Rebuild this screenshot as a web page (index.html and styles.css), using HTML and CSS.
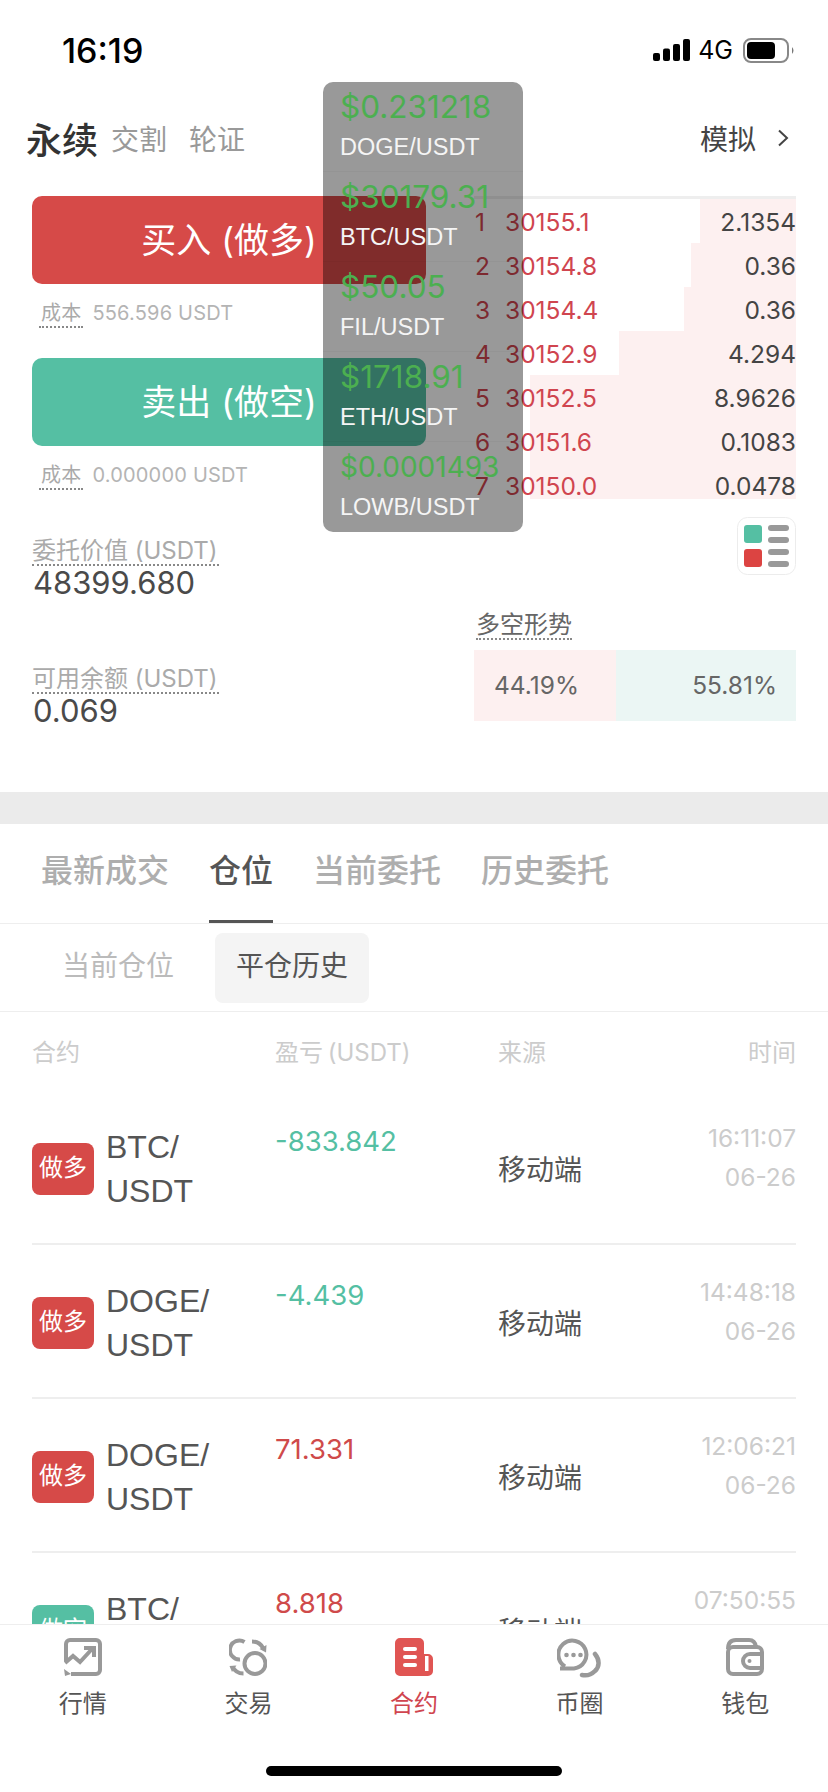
FILE: index.html
```html
<!DOCTYPE html>
<html lang="zh-CN">
<head>
    <meta charset="UTF-8">
    <meta name="viewport" content="width=device-width, initial-scale=1.0">
    <title>永续合约</title>
    <link rel="stylesheet" href="styles.css">
</head>
<body>
<div class="page">
    <div class="status">
        <span class="clock">16:19</span>
        <svg class="signal" width="37" height="22" viewBox="0 0 37 22"><rect x="0" y="14" width="7" height="8" rx="2"/><rect x="10" y="9.500" width="7" height="12.500" rx="2"/><rect x="20" y="5" width="7" height="17" rx="2"/><rect x="30" y="0" width="7" height="22" rx="2"/></svg>
        <span class="net">4G</span>
        <svg class="battery" width="52" height="25" viewBox="0 0 52 25"><rect x="1" y="1" width="44" height="23" rx="7" fill="none" stroke="#888" stroke-width="2"/><rect x="4" y="4" width="28" height="17" rx="4" fill="#000"/><path d="M49 9q3 3.500 0 7z" fill="#777"/></svg>
    </div>

    <div class="nav">
        <span class="nav-main">永续</span>
        <span class="nav-sub">交割</span>
        <span class="nav-sub">轮证</span>
        <span class="nav-right">模拟</span>
        <svg class="chevron" width="12" height="18" viewBox="0 0 12 18"><path d="M2 1.500l8 7.500-8 7.500" fill="none" stroke="#444" stroke-width="2"/></svg>
    </div>

    <div class="trade">
        <div class="trade-left">
            <div class="btn btn-buy">买入 (做多)</div>
            <div class="cost"><span class="dotted">成本</span><span>556.596 USDT</span></div>
            <div class="btn btn-sell">卖出 (做空)</div>
            <div class="cost"><span class="dotted">成本</span><span>0.000000 USDT</span></div>
            <div class="stat">
                <div><span class="stat-label">委托价值 (USDT)</span></div>
                <div class="stat-value">48399.680</div>
            </div>
            <div class="stat stat-second">
                <div><span class="stat-label">可用余额 (USDT)</span></div>
                <div class="stat-value">0.069</div>
            </div>
        </div>

        <div class="trade-right">
            <div class="book">
                <div class="book-row"><i class="depth" style="width:96px"></i><span class="num">1</span><span class="price">30155.1</span><span class="qty">2.1354</span></div>
                <div class="book-row"><i class="depth" style="width:105px"></i><span class="num">2</span><span class="price">30154.8</span><span class="qty">0.36</span></div>
                <div class="book-row"><i class="depth" style="width:112px"></i><span class="num">3</span><span class="price">30154.4</span><span class="qty">0.36</span></div>
                <div class="book-row"><i class="depth" style="width:177px"></i><span class="num">4</span><span class="price">30152.9</span><span class="qty">4.294</span></div>
                <div class="book-row"><i class="depth" style="width:266px"></i><span class="num">5</span><span class="price">30152.5</span><span class="qty">8.9626</span></div>
                <div class="book-row"><i class="depth" style="width:266px"></i><span class="num">6</span><span class="price">30151.6</span><span class="qty">0.1083</span></div>
                <div class="book-row"><i class="depth" style="width:266px"></i><span class="num">7</span><span class="price">30150.0</span><span class="qty">0.0478</span></div>
            </div>
            <svg class="book-toggle" width="59" height="58" viewBox="0 0 59 58">
                <rect x="0.500" y="0.500" width="58" height="57" rx="10" fill="#fff" stroke="#ececec"/>
                <rect x="7" y="8" width="18" height="18" rx="3" fill="#55bfa3"/>
                <rect x="7" y="32" width="18" height="18" rx="3" fill="#dc4442"/>
                <rect x="31" y="8" width="21" height="6" rx="3" fill="#999"/>
                <rect x="31" y="20" width="21" height="6" rx="3" fill="#999"/>
                <rect x="31" y="32" width="21" height="6" rx="3" fill="#999"/>
                <rect x="31" y="44" width="21" height="6" rx="3" fill="#999"/>
            </svg>
            <div class="ratio-title"><span class="dotted">多空形势</span></div>
            <div class="ratio">
                <div class="ratio-long">44.19%</div>
                <div class="ratio-short">55.81%</div>
            </div>
        </div>
    </div>

    <div class="band"></div>

    <div class="tabs">
        <div class="tab">最新成交</div>
        <div class="tab tab-active">仓位</div>
        <div class="tab">当前委托</div>
        <div class="tab">历史委托</div>
    </div>

    <div class="subtabs">
        <div class="subtab">当前仓位</div>
        <div class="subtab subtab-active">平仓历史</div>
    </div>

    <div class="table">
        <div class="table-head">
            <span>合约</span>
            <span>盈亏 (USDT)</span>
            <span>来源</span>
            <span>时间</span>
        </div>
        <div class="table-row">
            <div class="pair"><span class="badge badge-long">做多</span><span class="pair-name">BTC/<br>USDT</span></div>
            <div class="pnl loss">-833.842</div>
            <div class="source">移动端</div>
            <div class="time">16:11:07<br>06-26</div>
        </div>
        <div class="table-row">
            <div class="pair"><span class="badge badge-long">做多</span><span class="pair-name">DOGE/<br>USDT</span></div>
            <div class="pnl loss">-4.439</div>
            <div class="source">移动端</div>
            <div class="time">14:48:18<br>06-26</div>
        </div>
        <div class="table-row">
            <div class="pair"><span class="badge badge-long">做多</span><span class="pair-name">DOGE/<br>USDT</span></div>
            <div class="pnl gain">71.331</div>
            <div class="source">移动端</div>
            <div class="time">12:06:21<br>06-26</div>
        </div>
        <div class="table-row">
            <div class="pair"><span class="badge badge-short">做空</span><span class="pair-name">BTC/<br>USDT</span></div>
            <div class="pnl gain">8.818</div>
            <div class="source">移动端</div>
            <div class="time">07:50:55<br>06-26</div>
        </div>
    </div>

    <div class="ticker">
        <div class="ticker-item"><div class="ticker-price">$0.231218</div><div class="ticker-name">DOGE/USDT</div></div>
        <div class="ticker-item"><div class="ticker-price">$30179.31</div><div class="ticker-name">BTC/USDT</div></div>
        <div class="ticker-item"><div class="ticker-price">$50.05</div><div class="ticker-name">FIL/USDT</div></div>
        <div class="ticker-item"><div class="ticker-price">$1718.91</div><div class="ticker-name">ETH/USDT</div></div>
        <div class="ticker-item"><div class="ticker-price ticker-price-small">$0.0001493</div><div class="ticker-name">LOWB/USDT</div></div>
    </div>

    <div class="tabbar">
        <div class="tabbar-item">
            <svg width="38" height="38" viewBox="0 0 38 38" fill="none" stroke="#999" stroke-width="4">
                <path d="M2 23V6a4 4 0 0 1 4-4h26a4 4 0 0 1 4 4v26a4 4 0 0 1-4 4H7"/>
                <path d="M1 25l8-7 7 6 12-13"/>
                <path d="M20 10h10v9"/>
                <path d="M0 31l7 5-6 2z" fill="#999" stroke="none"/>
            </svg>
            <span>行情</span>
        </div>
        <div class="tabbar-item">
            <svg width="38" height="38" viewBox="0 0 38 38" fill="none" stroke="#999" stroke-width="4">
                <circle cx="26" cy="25.500" r="10.500"/>
                <path d="M15.500 4A9.500 9.500 0 1 0 11 21.500"/>
                <path d="M23 3.500c5 0 9 2.500 11 6.500"/>
                <path d="M30.500 11l7-4-.5 7.500z" fill="#999" stroke="none"/>
                <path d="M14.500 35.500c-5 0-9-2.500-11-7"/>
                <path d="M7.500 27.500l-7 .5 2.500 6z" fill="#999" stroke="none"/>
            </svg>
            <span>交易</span>
        </div>
        <div class="tabbar-item tabbar-active">
            <svg width="38" height="38" viewBox="0 0 38 38">
                <path d="M5 0h19a5 5 0 0 1 5 5v11h4a5 5 0 0 1 5 5v12a5 5 0 0 1-5 5H5a5 5 0 0 1-5-5V5a5 5 0 0 1 5-5z" fill="#e05553"/>
                <rect x="8" y="9" width="14" height="4" rx="2" fill="#fff"/>
                <rect x="8" y="17" width="14" height="4" rx="2" fill="#fff"/>
                <rect x="8" y="25" width="14" height="4" rx="2" fill="#fff"/>
                <rect x="30" y="18" width="3.500" height="15" fill="#fff"/>
            </svg>
            <span>合约</span>
        </div>
        <div class="tabbar-item">
            <svg width="45" height="40" viewBox="0 0 45 40" fill="none" stroke="#999" stroke-width="4">
                <path d="M8 28.500A14 14 0 1 1 17 30.500H3"/>
                <circle cx="9.500" cy="17" r="2.300" fill="#999" stroke="none"/>
                <circle cx="16.500" cy="17" r="2.300" fill="#999" stroke="none"/>
                <circle cx="23.500" cy="17" r="2.300" fill="#999" stroke="none"/>
                <path d="M38 16c5 6 4.500 13 0 17-3 3-8 5-13 4" stroke-linecap="round" stroke-width="4.500"/>
            </svg>
            <span>币圈</span>
        </div>
        <div class="tabbar-item">
            <svg width="38" height="38" viewBox="0 0 38 38" fill="none" stroke="#999" stroke-width="4">
                <path d="M2 11q0-9 8-9h13q6 0 7 7"/>
                <rect x="2" y="9" width="34" height="27" rx="5"/>
                <path d="M36 16H24a6.500 6.500 0 0 0 0 14h12"/>
                <circle cx="23.500" cy="23" r="2" fill="#999" stroke="none"/>
            </svg>
            <span>钱包</span>
        </div>
    </div>
    <div class="home-bar"></div>
</div>
</body>
</html>
```

FILE: styles.css
```css
* {
    box-sizing: border-box;
}
body {
    margin: 0;
    background: #fff;
    font-family: 'Inter', 'Noto Sans CJK SC', sans-serif;
    color: #555;
}
.page {
    position: relative;
    width: 828px;
    height: 1792px;
    overflow: hidden;
    background: #fff;
}
.dotted {
    display: inline-block;
    border-bottom: 2px dotted #888;
}

/* status bar */
.status {
    display: flex;
    align-items: center;
    height: 100px;
    padding: 0 33px 0 62px;
    color: #000;
}
.clock {
    flex: 1;
    font-size: 34px;
    font-weight: 500;
}
.signal {
    fill: #000;
}
.net {
    margin: 0 10px 0 8px;
    font-size: 25px;
}

/* top nav */
.nav {
    display: flex;
    align-items: center;
    height: 76px;
    margin-bottom: 20px;
    padding: 0 39px 0 26px;
}
.nav-main {
    margin-right: 13px;
    font-size: 36px;
    font-weight: 500;
    color: #333;
}
.nav-sub {
    margin-right: 22px;
    font-size: 28px;
    color: #999;
}
.nav-right {
    margin-left: auto;
    margin-right: 21px;
    font-size: 28px;
    color: #444;
}

/* trade area */
.trade {
    display: grid;
    grid-template-columns: 394px 322px;
    gap: 48px;
    height: 596px;
    padding: 0 32px;
}
.btn {
    height: 88px;
    line-height: 88px;
    border-radius: 10px;
    text-align: center;
    font-size: 35px;
    color: #fff;
}
.btn-buy {
    background: #d64a48;
}
.btn-sell {
    margin-top: 30px;
    background: #55bfa3;
}
.cost {
    display: flex;
    gap: 9px;
    height: 30px;
    margin-top: 14px;
    padding-left: 7px;
    line-height: 31px;
    font-size: 20px;
    letter-spacing: 0.2px;
    color: #b4b4b4;
}
.cost .dotted {
    height: 30px;
    padding: 0 2px;
    color: #aaa;
}
.stat {
    margin-top: 46px;
}
.stat-second {
    margin-top: 64px;
}
.stat-label {
    display: inline-block;
    height: 30px;
    padding-right: 1px;
    line-height: 30px;
    border-bottom: 2px dotted #888;
    font-size: 24px;
    color: #aaa;
}
.stat-value {
    height: 34px;
    line-height: 34px;
    padding-left: 1px;
    font-size: 31px;
    color: #4a4a4a;
}

/* order book */
.book {
    border-top: 3px solid #eee;
}
.book-row {
    position: relative;
    display: flex;
    height: 44px;
    line-height: 46px;
    font-size: 24.5px;
}
.depth {
    position: absolute;
    top: 0;
    right: 0;
    bottom: 0;
    background: #fdf0f0;
}
.book-row:last-child .depth {
    bottom: 8px;
}
.num, .price, .qty {
    position: relative;
}
.num {
    width: 31px;
    padding-left: 1px;
    color: #d0454f;
}
.price {
    flex: 1;
    color: #d0454f;
}
.qty {
    color: #444;
}
.book-toggle {
    display: block;
    margin: 10px 0 0 263px;
}
.ratio-title {
    height: 30px;
    margin: 35px 0 0 2px;
    line-height: 30px;
    font-size: 24px;
    color: #666;
}
.ratio-title .dotted {
    height: 30px;
}
.ratio {
    display: flex;
    height: 71px;
    margin-top: 10px;
    line-height: 71px;
    font-size: 24.5px;
    color: #666;
}
.ratio-long {
    width: 142px;
    padding-left: 20px;
    background: #fdf0f0;
}
.ratio-short {
    flex: 1;
    padding-right: 19px;
    text-align: right;
    background: #ebf6f4;
}

.band {
    height: 32px;
    background: #ebebeb;
}

/* tabs */
.tabs {
    display: flex;
    gap: 40px;
    height: 100px;
    padding-left: 41px;
    border-bottom: 1px solid #eee;
}
.tab {
    height: 99px;
    line-height: 94px;
    border-bottom: 3px solid transparent;
    font-size: 32px;
    font-weight: 500;
    color: #aeaeae;
}
.tab-active {
    color: #555;
    border-bottom-color: #555;
}
.subtabs {
    display: flex;
    gap: 20px;
    height: 88px;
    padding: 9px 0 0 41px;
    border-bottom: 1px solid #eee;
}
.subtab {
    height: 70px;
    line-height: 66px;
    padding: 0 21px;
    border-radius: 8px;
    font-size: 28px;
    color: #bbb;
}
.subtab-active {
    background: #f4f4f4;
    color: #555;
}

/* history table */
.table {
    margin: 0 32px;
}
.table-head, .table-row {
    display: grid;
    grid-template-columns: 243px 223px 1fr auto;
}
.table-head {
    padding: 26px 0 23px;
    line-height: 30px;
    font-size: 24px;
    word-spacing: -2px;
    color: #ccc;
}
.table-row {
    height: 154px;
    border-bottom: 2px solid #eee;
}
.pair {
    display: flex;
    align-items: center;
    gap: 12px;
    padding-top: 4px;
}
.badge {
    width: 62px;
    height: 52px;
    line-height: 50px;
    border-radius: 8px;
    text-align: center;
    font-size: 24px;
    color: #fff;
}
.badge-long {
    background: #d64a48;
}
.badge-short {
    background: #55bfa3;
}
.pair-name {
    line-height: 44px;
    font-family: 'Liberation Sans', sans-serif;
    font-size: 32px;
    color: #555;
}
.pnl {
    padding-top: 30px;
    line-height: 40px;
    font-size: 27.5px;
}
.loss {
    color: #55bfa3;
}
.gain {
    color: #cf4a4a;
}
.source {
    align-self: center;
    padding-top: 2px;
    font-size: 28px;
    color: #555;
}
.time {
    padding-top: 28px;
    line-height: 39px;
    text-align: right;
    font-size: 24.5px;
    color: #ccc;
}

/* floating price panel */
.ticker {
    position: absolute;
    top: 82px;
    left: 323px;
    width: 200px;
    height: 450px;
    border-radius: 10px;
    background: rgba(0, 0, 0, 0.4);
}
.ticker-item {
    height: 90px;
    padding: 7px 0 0 17px;
    border-bottom: 1px solid rgba(0, 0, 0, 0.03);
    white-space: nowrap;
}
.ticker-item:last-child {
    border-bottom: 0;
}
.ticker-price {
    height: 36px;
    line-height: 36px;
    font-size: 31.5px;
    color: #4caf50;
}
.ticker-price-small {
    font-size: 28px;
}
.ticker-name {
    margin-top: 5px;
    line-height: 34px;
    font-family: 'Liberation Sans', sans-serif;
    font-size: 23.5px;
    color: #f5f5f5;
}

/* bottom nav */
.tabbar {
    position: absolute;
    top: 1624px;
    left: 0;
    right: 0;
    display: grid;
    grid-template-columns: repeat(5, 1fr);
    height: 168px;
    padding-top: 13px;
    border-top: 1px solid #eee;
    background: #fff;
}
.tabbar-item {
    display: flex;
    flex-direction: column;
    align-items: center;
    height: 81px;
    justify-content: space-between;
    font-size: 24px;
    line-height: 30px;
    color: #555;
}
.tabbar-active {
    color: #d0454f;
}
.home-bar {
    position: absolute;
    left: 266px;
    top: 1766px;
    width: 296px;
    height: 10px;
    border-radius: 5px;
    background: #000;
}
```
